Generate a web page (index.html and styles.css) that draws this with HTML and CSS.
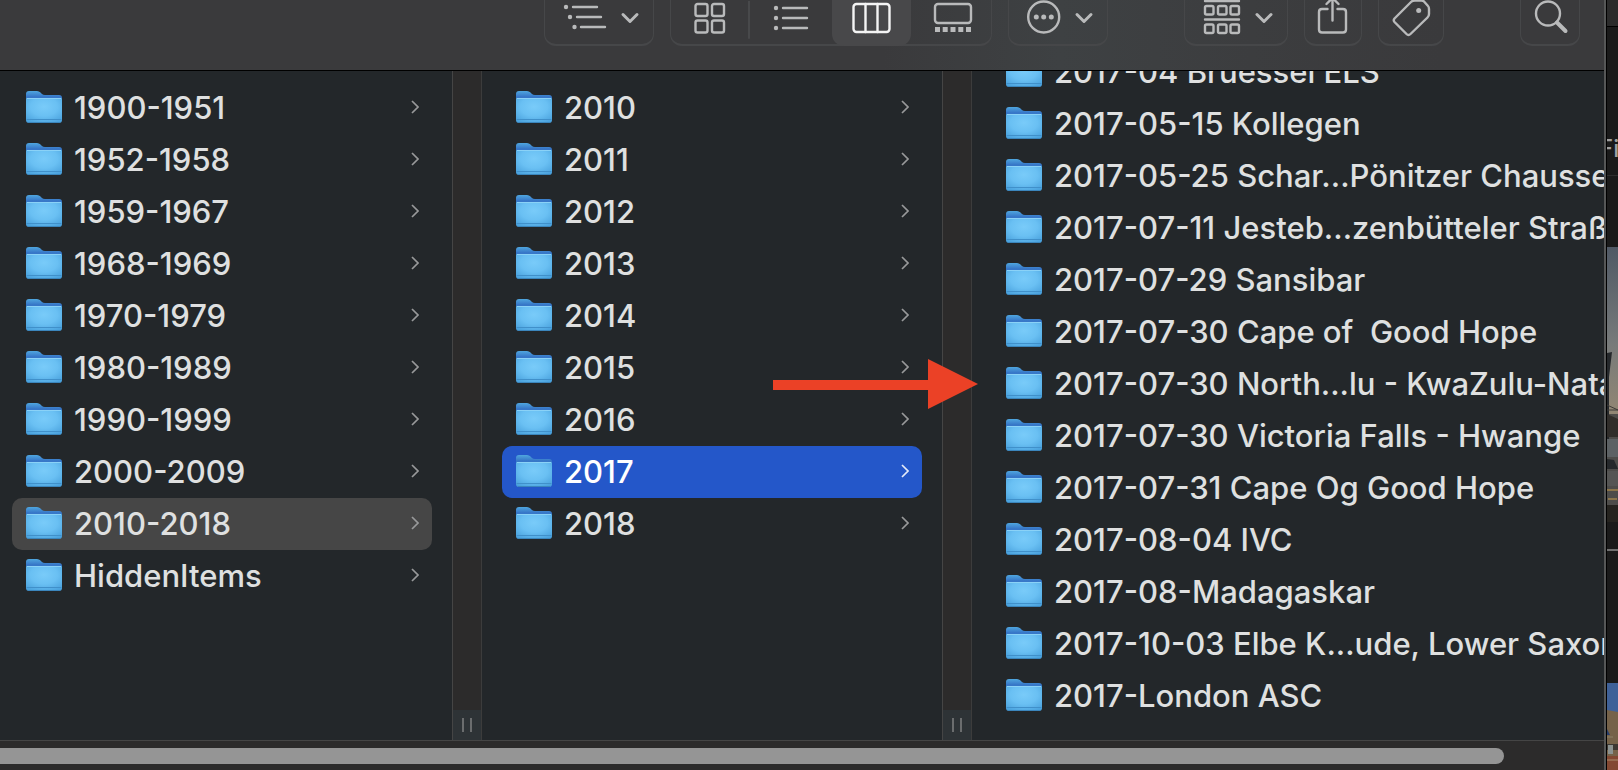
FILE: index.html
```html
<!DOCTYPE html>
<html lang="de">
<head>
  <meta charset="UTF-8">
  <title>Finder</title>
  <link rel="stylesheet" href="styles.css">
</head>
<body>
  <svg class="defs" aria-hidden="true">
    <defs>
      <linearGradient id="folder-back" x1="0" y1="0" x2="0" y2="1">
        <stop offset="0" stop-color="#4fa6de"/>
        <stop offset="0.3" stop-color="#3777c8"/>
      </linearGradient>
      <radialGradient id="folder-front" cx="0.5" cy="0.35" r="0.75">
        <stop offset="0" stop-color="#79cbf9"/>
        <stop offset="0.5" stop-color="#6ac0f3"/>
        <stop offset="1" stop-color="#48a0dc"/>
      </radialGradient>
    </defs>
    <symbol id="folder" viewBox="0 0 38 34">
      <path d="M1 4 Q1 1 4 1 H12 Q14 1 15.500 2.500 L17 4 Q18 5 20 5 H34 Q37 5 37 8 V20 H1 Z" fill="url(#folder-back)"/>
      <path d="M1 9 Q1 8 2 8 H36 Q37 8 37 9 V30 Q37 33 34 33 H4 Q1 33 1 30 Z" fill="url(#folder-front)"/>
      <path d="M2 8.500 H36" stroke="#8ad2f7" stroke-width="1"/>
      <path d="M1.500 29.500 H36.500" stroke="#4090ca" stroke-width="1"/>
      <path d="M3 32.500 H35" stroke="#3b86bd" stroke-width="1"/>
    </symbol>
    <symbol id="arrow" viewBox="0 0 8 14">
      <path d="M1 1 L7 7 L1 13" fill="none" stroke="currentColor" stroke-width="1.700"/>
    </symbol>
  </svg>

  <div class="screen">
    <main class="window">
      <header class="toolbar">
        <div class="tools">
          <button class="tool" aria-label="Group">
            <svg width="108" height="44" viewBox="1 0 108 44">
              <g class="dots"><circle cx="22" cy="7" r="2.200"/><circle cx="26" cy="17" r="2.200"/><circle cx="30.500" cy="27" r="2.200"/></g>
              <path d="M29 7 H53 M33 17 H57 M37 27 H61"/>
              <path class="chev" d="M79 14.500 L86 21.500 L93 14.500"/>
            </svg>
          </button>
          <div class="views">
            <button class="view" aria-label="Icons">
              <svg width="79" height="44" viewBox="1 0 79 44">
                <rect x="25.500" y="3" width="12" height="12" rx="2"/><rect x="42" y="3" width="12" height="12" rx="2"/>
                <rect x="25.500" y="19.500" width="12" height="12" rx="2"/><rect x="42" y="19.500" width="12" height="12" rx="2"/>
                <path class="line" d="M79 0 V37"/>
              </svg>
            </button>
            <button class="view" aria-label="List">
              <svg width="82" height="44" viewBox="0 0 82 44">
                <g class="dots"><circle cx="26" cy="7" r="2.200"/><circle cx="26" cy="17" r="2.200"/><circle cx="26" cy="27" r="2.200"/></g>
                <path d="M33 7 H57 M33 17 H57 M33 27 H57"/>
              </svg>
            </button>
            <button class="view active" aria-label="Columns">
              <svg width="79" height="44" viewBox="0 0 79 44">
                <rect x="21.500" y="3" width="36" height="28" rx="3"/>
                <path d="M33.500 3 V31 M45.500 3 V31"/>
              </svg>
            </button>
            <button class="view" aria-label="Gallery">
              <svg width="80" height="44" viewBox="0 0 80 44">
                <rect x="24" y="3" width="36" height="19" rx="3"/>
                <path class="thumbs" d="M24 26 h5 v5 h-5 z M31.700 26 h5 v5 h-5 z M39.500 26 h5 v5 h-5 z M47.300 26 h5 v5 h-5 z M55 26 h5 v5 h-5 z"/>
              </svg>
            </button>
          </div>
          <button class="tool" aria-label="Actions">
            <svg width="98" height="44" viewBox="1 0 98 44">
              <circle cx="35.700" cy="17" r="15.500"/>
              <g class="dots"><circle cx="28.300" cy="17" r="2.500"/><circle cx="35.700" cy="17" r="2.500"/><circle cx="43.300" cy="17" r="2.500"/></g>
              <path class="chev" d="M69 14.500 L76 21.500 L83 14.500"/>
            </svg>
          </button>
        </div>
        <div class="tools">
          <button class="tool" aria-label="Arrange">
            <svg width="102" height="44" viewBox="1 0 102 44">
              <path d="M21 1 H55 M21 19.500 H55"/>
              <rect x="21" y="6" width="8.500" height="8.500" rx="1.500"/><rect x="34" y="6" width="8.500" height="8.500" rx="1.500"/><rect x="46.500" y="6" width="8.500" height="8.500" rx="1.500"/>
              <rect x="21" y="24.500" width="8.500" height="8.500" rx="1.500"/><rect x="34" y="24.500" width="8.500" height="8.500" rx="1.500"/><rect x="46.500" y="24.500" width="8.500" height="8.500" rx="1.500"/>
              <path class="chev" d="M73 14.500 L80 21.500 L87 14.500"/>
            </svg>
          </button>
          <button class="tool" aria-label="Share">
            <svg width="56" height="44" viewBox="1 0 56 44">
              <path d="M23.500 9 H18 Q15 9 15 12 V29.500 Q15 32.500 18 32.500 H39 Q42 32.500 42 29.500 V12 Q42 9 39 9 H33.500"/>
              <path d="M28.500 20.500 V-2 M22.500 4 L28.500 -2 L34.500 4"/>
            </svg>
          </button>
          <button class="tool" aria-label="Tags">
            <svg width="64" height="44" viewBox="1 0 64 44">
              <path d="M16.500 18.500 L33 2 Q34.500 0.500 37 0.500 H43.500 Q45 0.500 46 1.500 L50 6 Q51 7 51 9 V14 Q51 16 49.500 17.500 L32.500 34 Q30.500 36 28.500 34 L16.500 22 Q15 20.300 16.500 18.500 Z"/>
              <g class="dots"><circle cx="40.700" cy="10.500" r="2.500"/></g>
            </svg>
          </button>
        </div>
        <div class="tools">
          <button class="tool" aria-label="Search">
            <svg width="58" height="44" viewBox="0 0 58 44">
              <circle cx="27" cy="13.500" r="12"/>
              <path class="handle" d="M36 22.500 L44.500 31"/>
            </svg>
          </button>
        </div>
      </header>

      <div class="columns">
        <nav class="column first">
          <a class="row" href="#"><svg class="folder"><use href="#folder"/></svg><span class="name">1900-1951</span><svg class="next"><use href="#arrow"/></svg></a>
          <a class="row" href="#"><svg class="folder"><use href="#folder"/></svg><span class="name">1952-1958</span><svg class="next"><use href="#arrow"/></svg></a>
          <a class="row" href="#"><svg class="folder"><use href="#folder"/></svg><span class="name">1959-1967</span><svg class="next"><use href="#arrow"/></svg></a>
          <a class="row" href="#"><svg class="folder"><use href="#folder"/></svg><span class="name">1968-1969</span><svg class="next"><use href="#arrow"/></svg></a>
          <a class="row" href="#"><svg class="folder"><use href="#folder"/></svg><span class="name">1970-1979</span><svg class="next"><use href="#arrow"/></svg></a>
          <a class="row" href="#"><svg class="folder"><use href="#folder"/></svg><span class="name">1980-1989</span><svg class="next"><use href="#arrow"/></svg></a>
          <a class="row" href="#"><svg class="folder"><use href="#folder"/></svg><span class="name">1990-1999</span><svg class="next"><use href="#arrow"/></svg></a>
          <a class="row" href="#"><svg class="folder"><use href="#folder"/></svg><span class="name">2000-2009</span><svg class="next"><use href="#arrow"/></svg></a>
          <a class="row open" href="#"><svg class="folder"><use href="#folder"/></svg><span class="name">2010-2018</span><svg class="next"><use href="#arrow"/></svg></a>
          <a class="row" href="#"><svg class="folder"><use href="#folder"/></svg><span class="name">HiddenItems</span><svg class="next"><use href="#arrow"/></svg></a>
        </nav>
        <div class="divider"><div class="grip"></div></div>

        <nav class="column">
          <a class="row" href="#"><svg class="folder"><use href="#folder"/></svg><span class="name">2010</span><svg class="next"><use href="#arrow"/></svg></a>
          <a class="row" href="#"><svg class="folder"><use href="#folder"/></svg><span class="name">2011</span><svg class="next"><use href="#arrow"/></svg></a>
          <a class="row" href="#"><svg class="folder"><use href="#folder"/></svg><span class="name">2012</span><svg class="next"><use href="#arrow"/></svg></a>
          <a class="row" href="#"><svg class="folder"><use href="#folder"/></svg><span class="name">2013</span><svg class="next"><use href="#arrow"/></svg></a>
          <a class="row" href="#"><svg class="folder"><use href="#folder"/></svg><span class="name">2014</span><svg class="next"><use href="#arrow"/></svg></a>
          <a class="row" href="#"><svg class="folder"><use href="#folder"/></svg><span class="name">2015</span><svg class="next"><use href="#arrow"/></svg></a>
          <a class="row" href="#"><svg class="folder"><use href="#folder"/></svg><span class="name">2016</span><svg class="next"><use href="#arrow"/></svg></a>
          <a class="row selected" href="#"><svg class="folder"><use href="#folder"/></svg><span class="name">2017</span><svg class="next"><use href="#arrow"/></svg></a>
          <a class="row" href="#"><svg class="folder"><use href="#folder"/></svg><span class="name">2018</span><svg class="next"><use href="#arrow"/></svg></a>
        </nav>
        <div class="divider"><div class="grip"></div></div>

        <nav class="column last">
          <div class="scrolled">
            <a class="row" href="#"><svg class="folder"><use href="#folder"/></svg><span class="name">2017-04 Bruessel ELS</span></a>
            <a class="row" href="#"><svg class="folder"><use href="#folder"/></svg><span class="name">2017-05-15 Kollegen</span></a>
            <a class="row" href="#"><svg class="folder"><use href="#folder"/></svg><span class="name">2017-05-25 Schar...Pönitzer Chaussee</span></a>
            <a class="row" href="#"><svg class="folder"><use href="#folder"/></svg><span class="name">2017-07-11 Jesteb...zenbütteler Straße</span></a>
            <a class="row" href="#"><svg class="folder"><use href="#folder"/></svg><span class="name">2017-07-29 Sansibar</span></a>
            <a class="row" href="#"><svg class="folder"><use href="#folder"/></svg><span class="name">2017-07-30 Cape of  Good Hope</span></a>
            <a class="row" href="#"><svg class="folder"><use href="#folder"/></svg><span class="name">2017-07-30 North...lu - KwaZulu-Natal</span></a>
            <a class="row" href="#"><svg class="folder"><use href="#folder"/></svg><span class="name">2017-07-30 Victoria Falls - Hwange</span></a>
            <a class="row" href="#"><svg class="folder"><use href="#folder"/></svg><span class="name">2017-07-31 Cape Og Good Hope</span></a>
            <a class="row" href="#"><svg class="folder"><use href="#folder"/></svg><span class="name">2017-08-04 IVC</span></a>
            <a class="row" href="#"><svg class="folder"><use href="#folder"/></svg><span class="name">2017-08-Madagaskar</span></a>
            <a class="row" href="#"><svg class="folder"><use href="#folder"/></svg><span class="name">2017-10-03 Elbe K...ude, Lower Saxony</span></a>
            <a class="row" href="#"><svg class="folder"><use href="#folder"/></svg><span class="name">2017-London ASC</span></a>
          </div>
        </nav>
      </div>

      <div class="scrollbar"><div class="thumb"></div></div>

      <!-- red marker drawn over the columns -->
      <svg class="marker" width="205" height="50" viewBox="0 0 205 50">
        <path d="M0 21 H155 V0 L205 25 L155 50 V31 H0 Z" fill="#eb4126"/>
      </svg>
    </main>

    <!-- window behind -->
    <aside class="behind">
      <div class="behind-bar"></div>
      <div class="behind-menu">File</div>
      <svg class="harbour" viewBox="0 0 11 275" preserveAspectRatio="none">
        <defs>
          <linearGradient id="dusk" x1="0" y1="0" x2="0" y2="1">
            <stop offset="0" stop-color="#505965"/>
            <stop offset="0.35" stop-color="#777a7a"/>
            <stop offset="0.6" stop-color="#918674"/>
          </linearGradient>
        </defs>
        <rect width="11" height="275" fill="url(#dusk)"/>
        <path d="M0 167 H11 V275 H0 Z" fill="#4d4c4a"/>
        <path d="M0 106 L5 105 L2 130 L2 195 H0 Z" fill="#25282b"/>
        <path d="M0 158 L11 163 M0 163 H11" stroke="#3d3b38"/>
        <path d="M0 167 L11 172 V190 H0 Z" fill="#302d2a"/>
        <path d="M0 192 H11 V210 H0 Z" fill="#5c6164"/>
        <path d="M0 212 L7 213 L11 222 H0 Z" fill="#25282b"/>
        <path d="M0 224 H11 V239 H0 Z" fill="#555554"/>
        <path d="M0 243 H11 M1 252 H10" stroke="#8b754b" stroke-width="2"/>
        <path d="M0 258 H11 V275 H0 Z" fill="#25231f"/>
      </svg>
      <div class="behind-line"></div>
      <svg class="street" viewBox="0 0 11 87" preserveAspectRatio="none">
        <rect width="11" height="87" fill="#3f6198"/>
        <path d="M0 27 L11 29 V87 H0 Z" fill="#756249"/>
        <path d="M0 46 L3 52 H0 Z" fill="#273e6c"/>
        <path d="M0 54 H6" stroke="#8c8069"/>
        <path d="M0 61 H11 V67 H0 Z" fill="#3c3833"/>
        <rect x="1" y="62" width="5" height="9" fill="#8b9290"/>
        <path d="M0 73 H11 V87 H0 Z" fill="#834832"/>
        <path d="M0 77 H11" stroke="#a98e6e"/>
      </svg>
    </aside>
  </div>
</body>
</html>
```
FILE: styles.css
```css
* {
  margin: 0;
  padding: 0;
  box-sizing: border-box;
}

body {
  background: #1a1a1a;
  color: #dfe0e0;
  font-family: Inter, "Liberation Sans", sans-serif;
  font-size: 31px;
  font-weight: 450;
  overflow: hidden;
}

.defs {
  position: absolute;
  width: 0;
  height: 0;
}

.screen {
  display: flex;
  height: 100vh;
}

.window {
  position: relative;
  flex: 1;
  min-width: 0;
  display: flex;
  flex-direction: column;
  background: #23272a;
  border-right: 2px solid #565757;
}

/* toolbar */
.toolbar {
  display: flex;
  justify-content: flex-end;
  align-items: flex-start;
  gap: 76px;
  height: 71px;
  padding-right: 24px;
  background: linear-gradient(90deg, #3a3a3c 55%, #3e4143 66%, #3c3d3f 78%, #3a3a3c 90%);
  border-bottom: 1px solid #000;
}

.tools {
  display: flex;
  gap: 16px;
}

.tool,
.views {
  display: flex;
  height: 46px;
  background: none;
  border: solid #464749;
  border-width: 0 1px 2px;
  border-radius: 0 0 12px 12px;
}

.view {
  height: 46px;
  background: none;
  border: none;
  border-radius: 0 0 12px 12px;
}

.view.active {
  background: #48484a;
}

.toolbar svg {
  display: block;
  fill: none;
  stroke: #b9babb;
  stroke-width: 2.4;
  stroke-linecap: round;
  stroke-linejoin: round;
}

.view.active svg {
  stroke: #f4f4f4;
}

.toolbar .dots,
.toolbar .thumbs {
  fill: #b9babb;
  stroke: none;
}

.toolbar .chev {
  stroke-width: 3;
}

.toolbar .handle {
  stroke-width: 4;
}

.toolbar .line {
  stroke: #48494b;
  stroke-width: 2;
}

/* file columns */
.columns {
  flex: 1;
  min-height: 0;
  display: flex;
}

.column {
  flex: none;
  width: 460px;
  padding: 11px 20px 0;
}

.column.first {
  width: 452px;
  padding-left: 12px;
}

.column.last {
  flex: 1;
  width: auto;
  min-width: 0;
  padding-top: 0;
  padding-right: 0;
  overflow: hidden;
}

.scrolled {
  margin-top: -25px;
}

.scrolled .row {
  padding-right: 0;
}

.row {
  display: flex;
  align-items: center;
  height: 52px;
  padding: 0 13px 2px;
  border-radius: 10px;
  color: inherit;
  text-decoration: none;
  white-space: pre;
}

.row.open {
  background: #464646;
}

.row.selected {
  background: #2457c9;
  color: #fff;
}

.folder {
  flex: none;
  width: 38px;
  height: 34px;
  margin-right: 11px;
}

.name {
  flex: 1;
  min-width: 0;
  overflow: hidden;
}

.next {
  width: 8px;
  height: 14px;
  color: #98999a;
}

.selected .next {
  color: #e4eaf8;
}

.divider {
  flex: none;
  display: flex;
  align-items: flex-end;
  width: 30px;
  background: #2c2b2b;
  border-left: 1px solid #454545;
  border-right: 1px solid #3c3c3c;
}

.grip {
  display: flex;
  justify-content: center;
  align-items: center;
  gap: 6px;
  width: 100%;
  height: 30px;
  background: #2e3336;
}

.grip::before,
.grip::after {
  content: "";
  width: 2px;
  height: 14px;
  background: #6b6d6e;
}

.scrollbar {
  height: 30px;
  padding: 7px 100px 0 0;
  background: #2c2b2b;
  border-top: 1px solid #454545;
}

.thumb {
  height: 16px;
  background: #959595;
  border-radius: 0 8px 8px 0;
}

.marker {
  position: absolute;
  left: 773px;
  top: 359px;
}

/* strip of the window behind */
.behind {
  flex: none;
  display: flex;
  flex-direction: column;
  width: 12px;
  border-left: 1px solid #000;
  overflow: hidden;
}

.behind-bar {
  height: 27px;
  background: #2b2b2b;
  border-bottom: 1px solid #000;
}

.behind-menu {
  height: 149px;
  padding-top: 106px;
  border-bottom: 1px solid #2e2e2e;
  color: #a0a0a0;
  font-size: 24px;
  line-height: 32px;
  text-indent: -8px;
}

.harbour {
  height: 275px;
  margin-top: 71px;
}

.behind-line {
  height: 2px;
  margin: 27px 0 132px;
  background: #707070;
}

.street {
  height: 87px;
}
```
